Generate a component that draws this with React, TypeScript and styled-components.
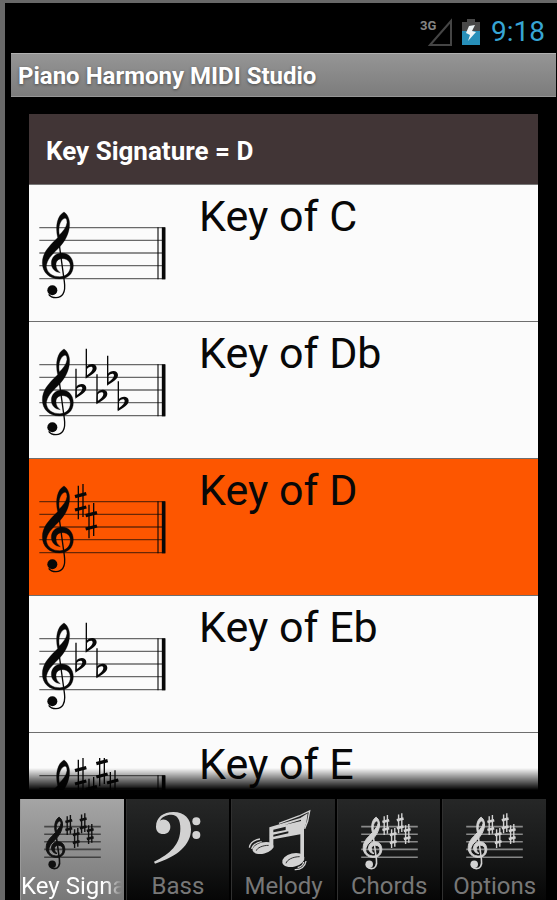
import React, { useState } from "react";
import styled, { createGlobalStyle, css } from "styled-components";

const GlobalStyle = createGlobalStyle`
  *, *::before, *::after { box-sizing: border-box; }
  body { margin: 0; background: #000; font-family: Roboto, "Noto Sans", sans-serif; }
  button { font: inherit; border: 0; margin: 0; cursor: pointer; }
  svg { display: block; }
`;

const Screen = styled.div`
  display: flex;
  flex-direction: column;
  height: 100vh;
  min-height: 480px;
  background: #000;
  border-left: 5px solid #696969;
  border-top: 3px solid #686868;
`;

const StatusBar = styled.div`
  display: flex;
  align-items: center;
  justify-content: flex-end;
  flex: none;
  height: 50px;
  padding: 8px 12px 0 0;
`;

const Indicators = styled.div`
  display: flex;
  align-items: flex-start;
  gap: 10px;
  margin-right: 11px;
`;

const Clock = styled.time`
  color: #37a5d4;
  font-size: 28px;
  line-height: 32px;
`;

const TitleBar = styled.h1`
  flex: none;
  margin: 0 1px 0 6px;
  padding: 0 7px;
  height: 44px;
  line-height: 44px;
  font-size: 24px;
  font-weight: 700;
  color: #fff;
  white-space: nowrap;
  text-shadow: 0 1px 3px rgba(0, 0, 0, 0.45);
  background: linear-gradient(#959595, #7c7c7c);
  border-top: 1px solid #b0b0b0;
  border-bottom: 1px solid #969696;
`;

const Panel = styled.main`
  display: flex;
  flex-direction: column;
  flex: 1;
  min-height: 0;
  margin: 17px 19px 9px 24px;
  mask-image: linear-gradient(to bottom, #000 calc(100% - 22px), transparent);
`;

const PanelHeader = styled.h2`
  flex: none;
  margin: 0;
  padding: 0 17px;
  height: 71px;
  line-height: 74px;
  font-size: 26px;
  font-weight: 700;
  color: #fff;
  background: #413536;
  border-bottom: 1px solid #777;
`;

const KeyList = styled.ul`
  flex: 1;
  min-height: 0;
  margin: 0;
  padding: 0;
  list-style: none;
  overflow-y: auto;
  scrollbar-width: none;
  background: #fbfbfb;
`;

const KeyRow = styled.button<{ $selected: boolean }>`
  display: flex;
  align-items: flex-start;
  gap: 33px;
  width: 100%;
  height: 137px;
  padding: 0 10px;
  text-align: left;
  color: #080808;
  background: ${(p) => (p.$selected ? "#fd5600" : "#fbfbfb")};
  border-bottom: 1px solid #6e6e6e;
`;

const KeyStaff = styled.svg`
  flex: none;
  width: 127px;
  height: 90px;
  margin-top: 25px;
`;

const KeyName = styled.span`
  font-size: 43px;
  line-height: 50px;
  padding-top: 6px;
`;

const TabBar = styled.nav`
  display: grid;
  grid-template-columns: repeat(5, minmax(0, 1fr));
  gap: 2px;
  flex: none;
  height: 101px;
  margin: 0 11px 0 15px;
`;

const Tab = styled.button<{ $active: boolean }>`
  display: flex;
  flex-direction: column;
  align-items: stretch;
  padding: 10px 0 0;
  overflow: hidden;
  color: #777;
  background: linear-gradient(#262727, #151616 60%, #060606);
  border-left: 1px solid #303030;
  ${(p) =>
    p.$active &&
    css`
      color: #fff;
      background: linear-gradient(#a5a5a5, #787878);
      border-left-color: #999;
    `}
`;

const TabIcon = styled.span<{ $active: boolean }>`
  display: flex;
  flex: none;
  align-items: center;
  justify-content: center;
  height: 64px;
  color: ${(p) => (p.$active ? "#101010" : "#d2d2d2")};
`;

const TabLabel = styled.span<{ $long: boolean }>`
  font-size: 24px;
  line-height: 27px;
  white-space: nowrap;
  overflow: hidden;
  text-align: ${(p) => (p.$long ? "left" : "center")};
  ${(p) =>
    p.$long &&
    css`
      mask-image: linear-gradient(to right, #000 82%, transparent 98%);
    `}
`;

const STAFF_LINES = [128, 166, 204, 242, 281];

function TrebleClef({ weight = 1 }: { weight?: number }) {
  return (
    <g>
      <path
        fill="currentColor"
        stroke="currentColor"
        strokeWidth={weight}
        fillRule="evenodd"
        d="M113 158C105 122 112 92 132 81C146 90 151 110 148 128C144 154 131 174 113 192C96 209 80 224 79 245C82 265 98 275 120 275C139 275 151 261 151 244C151 229 141 221 127 221C115 221 108 228 108 239C108 250 113 257 121 263C104 262 94 249 94 235C94 216 108 204 126 204C146 204 160 220 160 242C160 267 142 282 118 282C88 282 67 262 67 234C67 206 84 188 99 172ZM118 150C129 139 139 127 141 113C141 103 138 99 134 100C121 105 114 124 118 150Z"
      />
      <path
        d="M115 158L133 290C138 324 126 338 108 338C98 338 90 334 86 328"
        fill="none"
        stroke="currentColor"
        strokeWidth={3 + weight}
      />
      <circle cx="97" cy="316" r={14 + weight} fill="currentColor" />
    </g>
  );
}

function Flat({ x, y }: { x: number; y: number }) {
  return (
    <g transform={`translate(${x} ${y})`}>
      <path d="M0 0V86" stroke="currentColor" strokeWidth="4" />
      <path
        fill="currentColor"
        fillRule="evenodd"
        d="M0 55C8 44 30 42 31 58C31 71 15 79 -2 90ZM2 61V80C12 73 19 66 19 59C19 52 9 52 2 61Z"
      />
    </g>
  );
}

function Sharp({ x, y }: { x: number; y: number }) {
  return (
    <g transform={`translate(${x} ${y})`} stroke="currentColor">
      <path d="M-7 -47V54M7 -52V47" strokeWidth="4" />
      <path d="M-17 -14L17 -23M-17 26L17 17" strokeWidth="10" />
    </g>
  );
}

function IconSharp({ x, y }: { x: number; y: number }) {
  return (
    <g transform={`translate(${x} ${y})`} stroke="currentColor">
      <path d="M-8 -44V50M8 -50V44" strokeWidth="7" />
      <path d="M-17 -15L17 -24M-17 25L17 16" strokeWidth="13" />
    </g>
  );
}

type Mark = { kind: "flat" | "sharp"; x: number; y: number };

function Marks({ marks }: { marks: Mark[] }) {
  return (
    <>
      {marks.map((m) =>
        m.kind === "flat" ? (
          <Flat key={m.x} x={m.x} y={m.y} />
        ) : (
          <Sharp key={m.x} x={m.x} y={m.y} />
        )
      )}
    </>
  );
}

function Staff({ marks }: { marks: Mark[] }) {
  return (
    <KeyStaff viewBox="57 75 381 270" aria-hidden="true">
      {STAFF_LINES.map((y) => (
        <path key={y} d={`M58 ${y}H435`} stroke="currentColor" strokeOpacity="0.6" strokeWidth="4" />
      ))}
      <path d="M414 127V283" stroke="currentColor" strokeOpacity="0.55" strokeWidth="6" />
      <path d="M431 127V283" stroke="currentColor" strokeWidth="11" />
      <TrebleClef />
      <Marks marks={marks} />
    </KeyStaff>
  );
}

const ICON_SHARPS = [
  { x: 180, y: 120 },
  { x: 217, y: 185 },
  { x: 252, y: 111 },
  { x: 287, y: 165 },
];

function StaffIcon() {
  return (
    <svg width="57" height="57" viewBox="57 60 283 285" aria-hidden="true">
      {STAFF_LINES.map((y) => (
        <path key={y} d={`M57 ${y}H340`} stroke="currentColor" strokeOpacity="0.6" strokeWidth="8" />
      ))}
      <TrebleClef weight={5} />
      {ICON_SHARPS.map((s) => (
        <IconSharp key={s.x} x={s.x} y={s.y} />
      ))}
    </svg>
  );
}

function BassIcon() {
  return (
    <svg width="50" height="64" viewBox="458 237 150 192" fill="currentColor" aria-hidden="true">
      <path d="M467 290C467 262 489 246 519 246C553 246 572 266 572 298C572 345 530 381 464 401L461 395C510 371 540 343 540 296C540 269 531 254 513 254C497 254 484 261 479 272C492 263 510 273 510 290C510 304 501 312 489 312C475 312 467 303 467 290Z" />
      <circle cx="588" cy="274" r="12" />
      <circle cx="588" cy="315" r="12" />
    </svg>
  );
}

function MelodyIcon() {
  return (
    <svg width="71" height="64" viewBox="83 117 213 192" aria-hidden="true">
      <g fill="currentColor">
        <path
          fillRule="evenodd"
          d="M147 172L180 162L240 144L262 130L258 158L251 178V270H240V193L159 208V234H147ZM159 179V187L196 180V170ZM159 194V200L204 190V184ZM192 165L242 153V149Z"
        />
        <ellipse cx="128" cy="234" rx="32" ry="17" transform="rotate(-14 128 234)" />
        <ellipse cx="219" cy="270" rx="34" ry="20" transform="rotate(-14 219 270)" />
      </g>
      <path
        d="M87 233C89 220 101 210 119 207M94 237C97 225 108 218 124 215M223 299C242 300 255 289 257 273M232 293C243 290 249 283 250 276M176 160L236 138L268 123L262 154L253 176"
        fill="none"
        stroke="currentColor"
        strokeWidth="4"
      />
      <path
        d="M108 242C110 234 126 226 145 226M197 280C200 269 218 260 238 260"
        fill="none"
        stroke="#333"
        strokeWidth="3"
      />
    </svg>
  );
}

function SignalIcon() {
  return (
    <svg width="32" height="29" viewBox="0 0 32 29" aria-label="3G signal" role="img">
      <text x="0" y="12" fontSize="13" fontFamily="Roboto, sans-serif" fontWeight="700" fill="#858585">
        3G
      </text>
      <path d="M10 27L31 3V27Z" fill="none" stroke="#454545" strokeWidth="2" />
    </svg>
  );
}

function BatteryIcon() {
  return (
    <svg width="18" height="29" viewBox="0 0 18 29" aria-label="Battery charging" role="img">
      <path d="M5 1H13V4H18V13H0V4H5Z" fill="#484848" />
      <path d="M0 13H18V27H0Z" fill="#278fb9" />
      <path d="M7 8L13 7L10 13L14 14L6 23L8 17L4 15Z" fill="#eef4f6" />
    </svg>
  );
}

const KEYS: { name: string; marks: Mark[] }[] = [
  { name: "C", marks: [] },
  {
    name: "Db",
    marks: [
      { kind: "flat", x: 168, y: 140 },
      { kind: "flat", x: 199, y: 80 },
      { kind: "flat", x: 231, y: 157 },
      { kind: "flat", x: 263, y: 101 },
      { kind: "flat", x: 295, y: 178 },
    ],
  },
  {
    name: "D",
    marks: [
      { kind: "sharp", x: 182, y: 127 },
      { kind: "sharp", x: 214, y: 184 },
    ],
  },
  {
    name: "Eb",
    marks: [
      { kind: "flat", x: 168, y: 140 },
      { kind: "flat", x: 199, y: 80 },
      { kind: "flat", x: 231, y: 157 },
    ],
  },
  {
    name: "E",
    marks: [
      { kind: "sharp", x: 182, y: 127 },
      { kind: "sharp", x: 214, y: 184 },
      { kind: "sharp", x: 246, y: 106 },
      { kind: "sharp", x: 278, y: 164 },
    ],
  },
];

const TABS = [
  { label: "Key Signature", icon: <StaffIcon />, long: true },
  { label: "Bass", icon: <BassIcon />, long: false },
  { label: "Melody", icon: <MelodyIcon />, long: false },
  { label: "Chords", icon: <StaffIcon />, long: false },
  { label: "Options", icon: <StaffIcon />, long: false },
];

export default function App() {
  const [selected, setSelected] = useState("D");
  const [tab, setTab] = useState("Key Signature");

  return (
    <>
      <GlobalStyle />
      <Screen>
        <StatusBar>
          <Indicators>
            <SignalIcon />
            <BatteryIcon />
          </Indicators>
          <Clock>9:18</Clock>
        </StatusBar>
        <TitleBar>Piano Harmony MIDI Studio</TitleBar>
        <Panel>
          <PanelHeader>Key Signature = {selected}</PanelHeader>
          <KeyList>
            {KEYS.map((k) => (
              <li key={k.name}>
                <KeyRow
                  type="button"
                  $selected={k.name === selected}
                  aria-pressed={k.name === selected}
                  onClick={() => setSelected(k.name)}
                >
                  <Staff marks={k.marks} />
                  <KeyName>Key of {k.name}</KeyName>
                </KeyRow>
              </li>
            ))}
          </KeyList>
        </Panel>
        <TabBar>
          {TABS.map((t) => (
            <Tab
              key={t.label}
              type="button"
              $active={t.label === tab}
              aria-pressed={t.label === tab}
              onClick={() => setTab(t.label)}
            >
              <TabIcon $active={t.label === tab}>{t.icon}</TabIcon>
              <TabLabel $long={t.long}>{t.label}</TabLabel>
            </Tab>
          ))}
        </TabBar>
      </Screen>
    </>
  );
}
